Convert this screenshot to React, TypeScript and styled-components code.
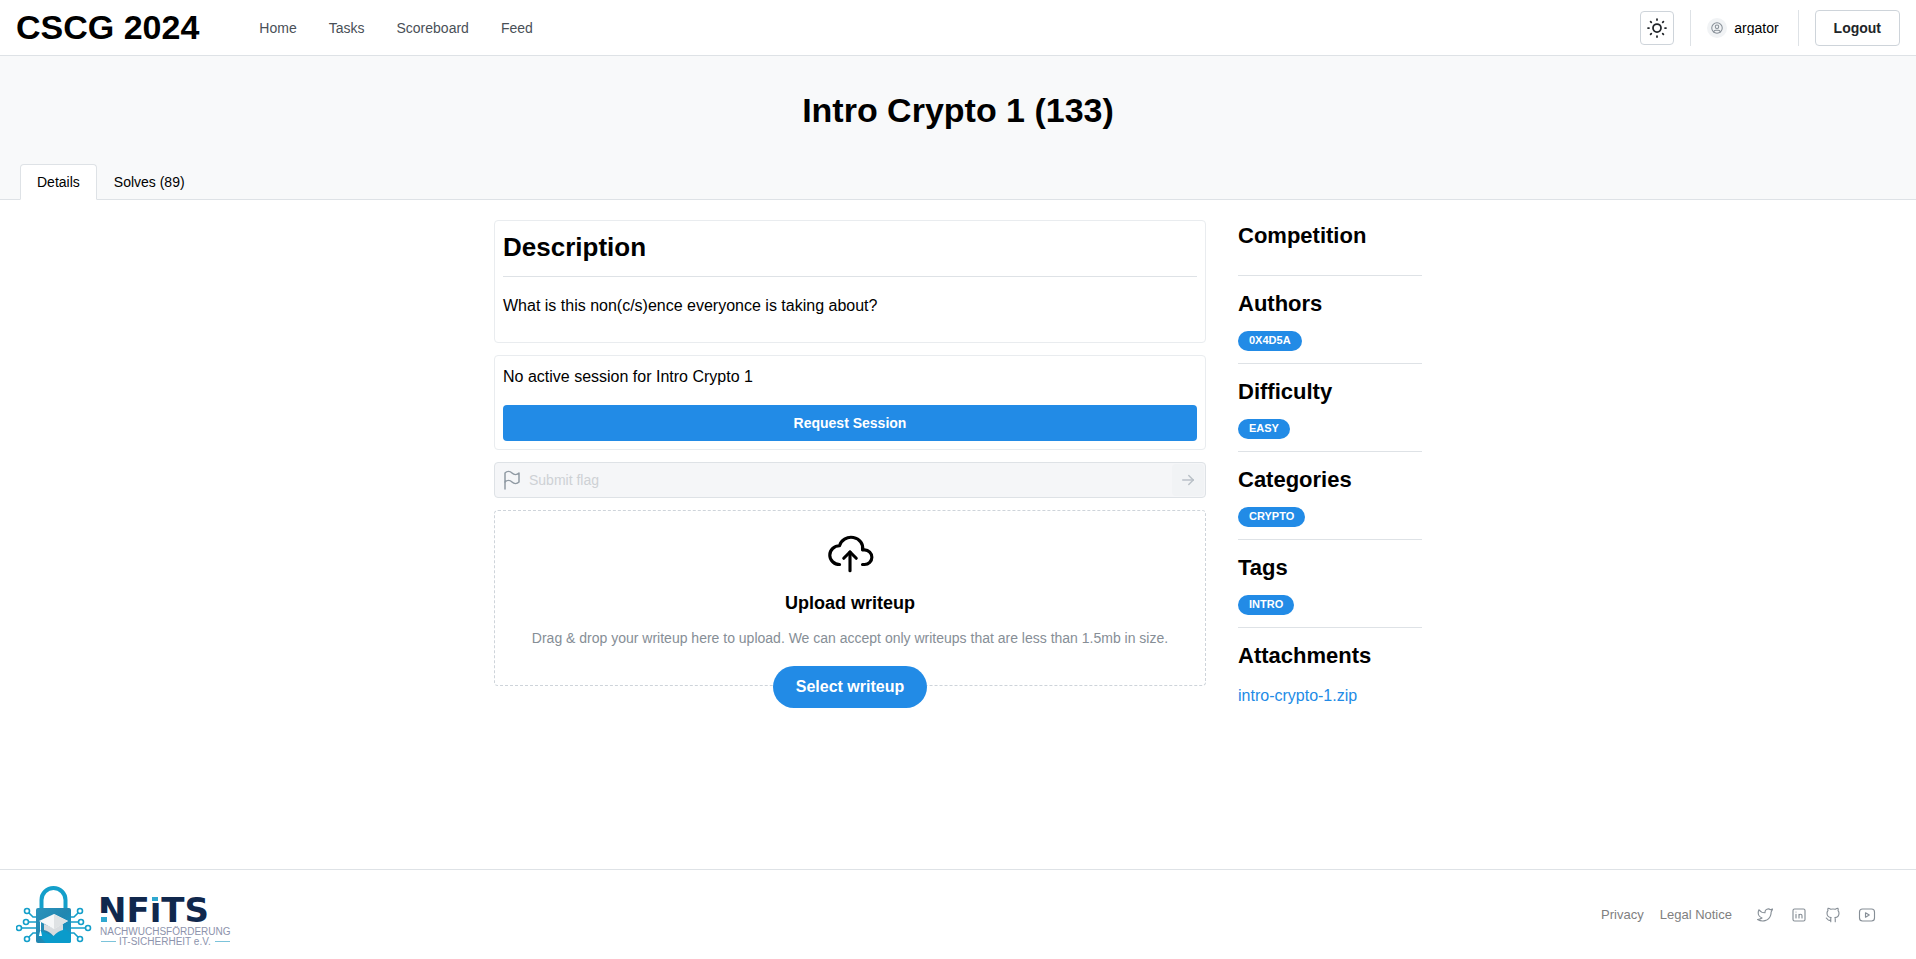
import React from "react";
import styled, { createGlobalStyle } from "styled-components";
import {
  TbArrowRight,
  TbBrandGithub,
  TbBrandTwitter,
  TbCloudUpload,
  TbFlag,
  TbSun,
  TbUserCircle,
} from "react-icons/tb";

const GlobalStyle = createGlobalStyle`
  *, *::before, *::after { box-sizing: border-box; }
  body {
    margin: 0;
    background: #fff;
    color: #000;
    font-family: "Liberation Sans", Arial, sans-serif;
    font-size: 16px;
    line-height: 25px;
  }
  h1, h2, h3, p { margin: 0; }
  button, input { font-family: inherit; }
  a { text-decoration: none; }
  svg { flex: none; }
`;

const Page = styled.div`
  display: flex;
  flex-direction: column;
  min-height: 100vh;
`;

const Header = styled.header`
  display: flex;
  align-items: center;
  height: 56px;
  padding: 0 16px;
  border-bottom: 1px solid #dee2e6;
`;

const Brand = styled.div`
  padding-bottom: 2px;
  font-size: 34px;
  line-height: 44px;
  font-weight: 700;
`;

const Nav = styled.nav`
  display: flex;
  gap: 8px;
  margin-left: 48px;
`;

const NavLink = styled.a`
  padding: 0 12px;
  color: #495057;
  font-size: 14px;
  line-height: 22px;
`;

const HeaderTools = styled.div`
  display: flex;
  align-items: center;
  gap: 16px;
  margin-left: auto;
`;

const IconButton = styled.button`
  display: grid;
  place-items: center;
  width: 34px;
  height: 34px;
  padding: 0;
  border: 1px solid #ced4da;
  border-radius: 4px;
  background: #fff;
  color: #212529;
`;

const Separator = styled.div`
  width: 1px;
  height: 36px;
  background: #dee2e6;
`;

const User = styled.a`
  display: flex;
  align-items: center;
  gap: 7px;
  margin-right: 3px;
  color: #000;
  font-size: 14px;
`;

const Avatar = styled.span`
  display: grid;
  place-items: center;
  width: 20px;
  height: 20px;
  border-radius: 50%;
  background: #f1f3f5;
  color: #868e96;
`;

const UserName = styled.span`
  overflow: hidden;
  line-height: 14px;
`;

const LogoutButton = styled.button`
  height: 36px;
  padding: 0 18px;
  border: 1px solid #ced4da;
  border-radius: 4px;
  background: #fff;
  color: #212529;
  font-size: 14px;
  font-weight: 700;
`;

const Hero = styled.section`
  display: flex;
  flex-direction: column;
  justify-content: space-between;
  height: 144px;
  padding: 32px 20px 0;
  border-bottom: 1px solid #dee2e6;
  background: #f8f9fa;
`;

const HeroTitle = styled.h1`
  font-size: 34px;
  line-height: 44px;
  text-align: center;
`;

const Tabs = styled.div`
  display: flex;
  margin-bottom: -1px;
`;

const Tab = styled.button<{ $active?: boolean }>`
  height: 36px;
  padding: 0 16px;
  border: 1px solid ${(p) => (p.$active ? "#dee2e6" : "transparent")};
  border-bottom-color: ${(p) => (p.$active ? "#fff" : "transparent")};
  border-radius: 4px 4px 0 0;
  background: ${(p) => (p.$active ? "#fff" : "transparent")};
  color: #000;
  font-size: 14px;
`;

const Main = styled.main`
  display: grid;
  grid-template-columns: minmax(0, 1fr) 184px;
  align-items: start;
  gap: 32px;
  width: 100%;
  max-width: 960px;
  margin: 0 auto;
  padding: 20px 16px;
`;

const Content = styled.div`
  display: flex;
  flex-direction: column;
  gap: 12px;
`;

const Card = styled.section`
  padding: 8px;
  border: 1px solid #e9ecef;
  border-radius: 4px;
`;

const CardTitle = styled.h2`
  padding-bottom: 10px;
  border-bottom: 1px solid #dee2e6;
  font-size: 26px;
  line-height: 37px;
`;

const CardText = styled.p`
  padding: 16px 0;
`;

const SessionText = styled.p`
  margin-bottom: 16px;
`;

const SessionButton = styled.button`
  display: block;
  width: 100%;
  height: 36px;
  border: 0;
  border-radius: 4px;
  background: #228be6;
  color: #fff;
  font-size: 14px;
  font-weight: 700;
`;

const FlagForm = styled.form`
  display: flex;
  align-items: center;
  height: 36px;
  padding: 0 1px 0 5px;
  border: 1px solid #dee2e6;
  border-radius: 4px;
  background: #f5f6f8;
  color: #909aa3;
`;

const FlagInput = styled.input`
  flex: 1;
  min-width: 0;
  margin-left: 5px;
  padding: 0;
  border: 0;
  background: transparent;
  font-size: 14px;
  &::placeholder { color: #ced1d5; opacity: 1; }
`;

const FlagSubmit = styled.button`
  display: grid;
  place-items: center;
  width: 32px;
  height: 32px;
  padding: 0;
  border: 0;
  border-radius: 4px;
  background: #f1f3f5;
  color: #b9c0c7;
`;

const Dropzone = styled.section`
  display: flex;
  flex-direction: column;
  align-items: center;
  padding-top: 16px;
  border: 1px dashed #ced4da;
  border-radius: 4px;
  text-align: center;
`;

const DropTitle = styled.h3`
  margin-top: 12px;
  font-size: 18px;
  line-height: 28px;
`;

const DropHint = styled.p`
  margin: 10px 0 17px;
  color: #868e96;
  font-size: 14px;
  line-height: 22px;
`;

const SelectButton = styled.button`
  height: 42px;
  margin-bottom: -23px;
  padding: 0 23px;
  border: 0;
  border-radius: 32px;
  background: #228be6;
  color: #fff;
  font-size: 16px;
  font-weight: 700;
`;

const Facts = styled.aside`
  display: flex;
  flex-direction: column;
`;

const Fact = styled.section`
  padding: 12px 0;
  border-top: 1px solid #dee2e6;
  &:first-child {
    padding: 0 0 24px;
    border-top: 0;
  }
`;

const FactTitle = styled.h2`
  font-size: 22px;
  line-height: 31px;
`;

const Badge = styled.span`
  display: block;
  width: fit-content;
  height: 20px;
  margin-top: 12px;
  padding: 0 11px;
  border-radius: 10px;
  background: #228be6;
  color: #fff;
  font-size: 11px;
  line-height: 19px;
  font-weight: 700;
  text-transform: uppercase;
`;

const FileLink = styled.a`
  display: block;
  margin-top: 12px;
  color: #228be6;
`;

const Footer = styled.footer`
  display: flex;
  align-items: center;
  justify-content: space-between;
  height: 90px;
  margin-top: auto;
  padding: 0 16px;
  border-top: 1px solid #dee2e6;
`;

const FooterNav = styled.nav`
  display: flex;
  align-items: center;
  gap: 16px;
  margin-right: 16px;
`;

const FooterLink = styled.a`
  color: #808080;
  font-size: 13px;
  line-height: 20px;
`;

const Social = styled.div`
  display: flex;
`;

const SocialLink = styled.a`
  display: grid;
  place-items: center;
  width: 34px;
  height: 34px;
  color: #868e96;
`;

const Wordmark = styled.text`
  fill: #10284d;
  font-family: "DejaVu Sans", sans-serif;
  font-size: 34px;
  font-weight: 700;
`;

const LogoLine = styled.text`
  fill: #8d93ac;
  font-size: 10px;
`;

function Logo() {
  return (
    <svg width="218" height="62" viewBox="0 0 218 62" role="img" aria-label="NFiTS Nachwuchsförderung IT-Sicherheit e.V.">
      <defs>
        <linearGradient id="lock-body" x1="0" y1="0" x2="1" y2="1">
          <stop offset="0" stopColor="#2a93bc" />
          <stop offset="0.5" stopColor="#2286b0" />
          <stop offset="1" stopColor="#0b9fd0" />
        </linearGradient>
      </defs>
      <g fill="none" stroke="#149fca" strokeWidth="1.6">
        <path d="M21 33 H17 L13 29 M21 38 H13 M21 44 H6 M21 49 H17 L13 53" />
        <path d="M54 33 H58 L62 29 M54 38 H62 M54 44 H69 M54 49 H58 L62 53" />
        <circle cx="11" cy="27" r="2.5" />
        <circle cx="10" cy="38" r="2.5" />
        <circle cx="3" cy="44" r="2.5" />
        <circle cx="11" cy="55" r="2.5" />
        <circle cx="64" cy="27" r="2.5" />
        <circle cx="65" cy="38" r="2.5" />
        <circle cx="72" cy="44" r="2.5" />
        <circle cx="64" cy="55" r="2.5" />
      </g>
      <path d="M25.5 26 V16 a12 12 0 0 1 24 0 V26" fill="none" stroke="#149fca" strokeWidth="4" />
      <rect x="20" y="24" width="35" height="35" rx="2" fill="url(#lock-body)" />
      <path d="M26 47 L37 52 L48 44 L55 50 V57 a2 2 0 0 1 -2 2 H30 L22 51 Z" fill="#0a9bcb" />
      <path d="M28 40 L37.5 44 L47 40 V46 Q42 47 37.5 52 Q33 47 28 46 Z" fill="#d9dcdf" />
      <path d="M23 37 L38 30 L52 37 L38 45 Z" fill="#f6f7f8" />
      <path d="M38 30 L52 37 L38 45 Z" fill="#dfe2e4" />
      <path d="M24.5 38 V46" stroke="#fff" strokeWidth="1" />
      <path d="M24.5 45 L26 52 H23 Z" fill="#fff" />
      <Wordmark x="82" y="38">NFiTS</Wordmark>
      <rect x="84" y="29" width="8" height="10" fill="#fff" />
      <rect x="85" y="33" width="6" height="5" fill="#2fa8d0" />
      <rect x="135" y="11" width="9" height="7" fill="#fff" />
      <rect x="136" y="13" width="6" height="4" fill="#2fa8d0" />
      <LogoLine x="84" y="51">NACHWUCHSFÖRDERUNG</LogoLine>
      <LogoLine x="103" y="61">IT-SICHERHEIT e.V.</LogoLine>
      <path d="M85 57.5 H100 M199 57.5 H214" stroke="#7cc3da" strokeWidth="1" />
    </svg>
  );
}

function LinkedinIcon() {
  return (
    <svg width="18" height="18" viewBox="0 0 24 24" fill="none" stroke="currentColor" strokeWidth="1.5" strokeLinecap="round" strokeLinejoin="round">
      <rect x="4" y="4" width="16" height="16" rx="2" />
      <path d="M8 11v5M8 8v.01M12 16v-5M16 16v-3a2 2 0 0 0 -4 0" />
    </svg>
  );
}

function YoutubeIcon() {
  return (
    <svg width="18" height="18" viewBox="0 0 24 24" fill="none" stroke="currentColor" strokeWidth="1.5" strokeLinecap="round" strokeLinejoin="round">
      <rect x="2" y="4" width="20" height="16" rx="4" />
      <path d="M10 9l5 3l-5 3z" />
    </svg>
  );
}

const socials = [
  { label: "Twitter", icon: <TbBrandTwitter size={18} strokeWidth={1.5} /> },
  { label: "LinkedIn", icon: <LinkedinIcon /> },
  { label: "GitHub", icon: <TbBrandGithub size={18} strokeWidth={1.5} /> },
  { label: "YouTube", icon: <YoutubeIcon /> },
];

const facts = [
  { title: "Authors", value: "0x4d5a" },
  { title: "Difficulty", value: "Easy" },
  { title: "Categories", value: "Crypto" },
  { title: "Tags", value: "Intro" },
];

export default function App() {
  return (
    <Page>
      <GlobalStyle />
      <Header>
        <Brand>CSCG 2024</Brand>
        <Nav>
          {["Home", "Tasks", "Scoreboard", "Feed"].map((item) => (
            <NavLink href="#" key={item}>{item}</NavLink>
          ))}
        </Nav>
        <HeaderTools>
          <IconButton aria-label="Toggle color scheme"><TbSun size={24} strokeWidth={1.75} /></IconButton>
          <Separator />
          <User href="#">
            <Avatar><TbUserCircle size={14} strokeWidth={1.75} /></Avatar>
            <UserName>argator</UserName>
          </User>
          <Separator />
          <LogoutButton>Logout</LogoutButton>
        </HeaderTools>
      </Header>
      <Hero>
        <HeroTitle>Intro Crypto 1 (133)</HeroTitle>
        <Tabs role="tablist">
          <Tab $active role="tab" aria-selected="true">Details</Tab>
          <Tab role="tab" aria-selected="false">Solves (89)</Tab>
        </Tabs>
      </Hero>
      <Main>
        <Content>
          <Card>
            <CardTitle>Description</CardTitle>
            <CardText>What is this non(c/s)ence everyonce is taking about?</CardText>
          </Card>
          <Card>
            <SessionText>No active session for Intro Crypto 1</SessionText>
            <SessionButton>Request Session</SessionButton>
          </Card>
          <FlagForm>
            <TbFlag size={24} strokeWidth={1.5} />
            <FlagInput placeholder="Submit flag" aria-label="Submit flag" disabled />
            <FlagSubmit aria-label="Submit" type="button" disabled>
              <TbArrowRight size={18} strokeWidth={2} />
            </FlagSubmit>
          </FlagForm>
          <Dropzone>
            <TbCloudUpload size={50} strokeWidth={1.5} />
            <DropTitle>Upload writeup</DropTitle>
            <DropHint>
              Drag &amp; drop your writeup here to upload. We can accept only writeups that are less than 1.5mb in size.
            </DropHint>
            <SelectButton>Select writeup</SelectButton>
          </Dropzone>
        </Content>
        <Facts>
          <Fact><FactTitle>Competition</FactTitle></Fact>
          {facts.map((fact) => (
            <Fact key={fact.title}>
              <FactTitle>{fact.title}</FactTitle>
              <Badge>{fact.value}</Badge>
            </Fact>
          ))}
          <Fact>
            <FactTitle>Attachments</FactTitle>
            <FileLink href="#">intro-crypto-1.zip</FileLink>
          </Fact>
        </Facts>
      </Main>
      <Footer>
        <Logo />
        <FooterNav>
          <FooterLink href="#">Privacy</FooterLink>
          <FooterLink href="#">Legal Notice</FooterLink>
          <Social>
            {socials.map(({ label, icon }) => (
              <SocialLink href="#" aria-label={label} key={label}>{icon}</SocialLink>
            ))}
          </Social>
        </FooterNav>
      </Footer>
    </Page>
  );
}
